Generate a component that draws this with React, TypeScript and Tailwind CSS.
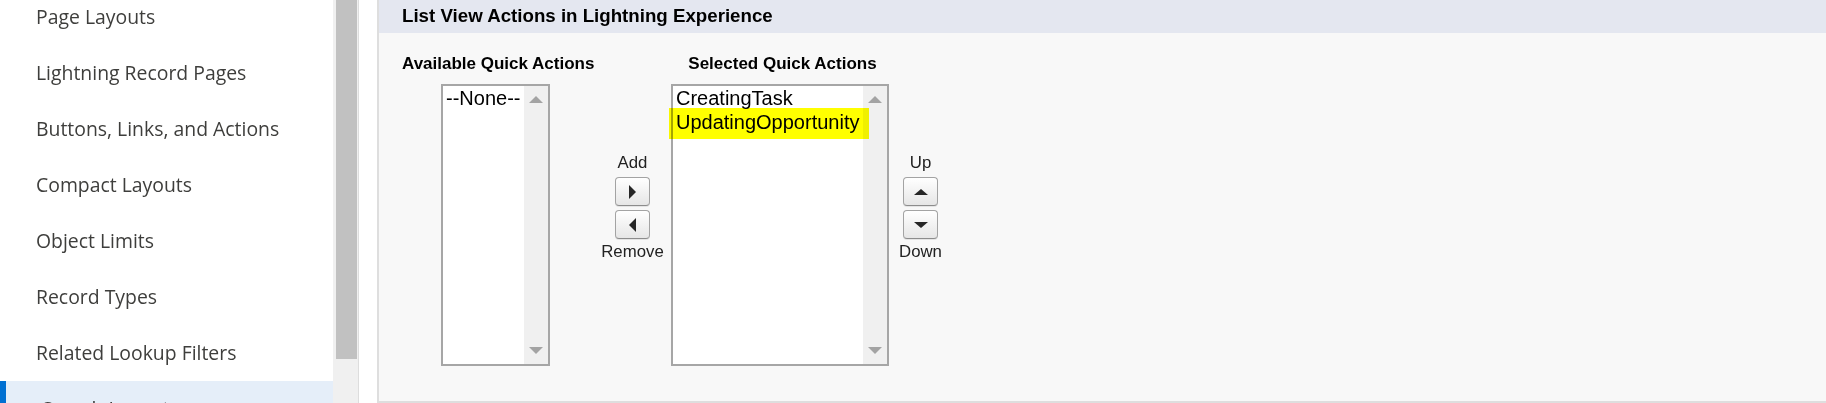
import React from "react";

const navItems = [
  "Page Layouts",
  "Lightning Record Pages",
  "Buttons, Links, and Actions",
  "Compact Layouts",
  "Object Limits",
  "Record Types",
  "Related Lookup Filters",
  "Search Layouts",
];

type Dir = "left" | "right" | "up" | "down";

function ArrowButton({ dir }: { dir: Dir }) {
  const vertical = dir === "up" || dir === "down";
  const d = {
    right: "M4 1 L11 8 L4 15 Z",
    left: "M11 1 L4 8 L11 15 Z",
    up: "M0 8 L7 2 L14 8 Z",
    down: "M0 2 L14 2 L7 8 Z",
  }[dir];
  return (
    <div className="flex h-[29px] w-[35px] items-center justify-center rounded-[4px] border border-[#a3a3a3] border-b-[#8c8c8c] bg-gradient-to-b from-white to-[#e6e6e6] shadow-[0_1px_0_rgba(0,0,0,0.08)]">
      <svg width={vertical ? 14 : 15} height={vertical ? 10 : 16} viewBox={vertical ? "0 0 14 10" : "0 0 15 16"}>
        <path d={d} fill="#262626" />
      </svg>
    </div>
  );
}

function ListBox({ items, width, children }: { items: string[]; width: string; children?: React.ReactNode }) {
  return (
    <div className={`relative flex h-[282px] ${width} border-2 border-[#a6a6a6] bg-white`}>
      <div className="flex-1 pl-[3px]">
        {items.map((it) => (
          <div key={it} className="h-[24px] whitespace-nowrap text-[20px] leading-[24px] text-black">
            {it}
          </div>
        ))}
      </div>
      <div className="flex w-[24px] flex-col items-center justify-between bg-[#f0f0f0] py-[9px]">
        <svg width="14" height="8" viewBox="0 0 14 8">
          <path d="M0 8 L7 1 L14 8 Z" fill="#a3a3a3" />
        </svg>
        <svg width="14" height="8" viewBox="0 0 14 8">
          <path d="M0 0 L14 0 L7 7 Z" fill="#a3a3a3" />
        </svg>
      </div>
      {children}
    </div>
  );
}

function ButtonColumn({ top, bottom, first, second }: { top: string; bottom: string; first: Dir; second: Dir }) {
  return (
    <div className="flex flex-col items-center pt-[99px] text-[16.8px] leading-[19px] text-[#222]">
      <span>{top}</span>
      <div className="mt-[5px]">
        <ArrowButton dir={first} />
      </div>
      <div className="mt-[4px]">
        <ArrowButton dir={second} />
      </div>
      <span className="mt-[3px]">{bottom}</span>
    </div>
  );
}

export default function App() {
  return (
    <div className="flex h-[403px] w-[1826px] overflow-hidden bg-white font-['Liberation_Sans',Arial,sans-serif]">
      {/* setup tree, scrolled part way down */}
      <nav className="w-[333px] shrink-0 overflow-hidden font-['Open_Sans',sans-serif]">
        <ul className="-mt-[11px]">
          {navItems.map((label, i) => (
            <li
              key={label}
              className={`flex h-[56px] items-center pl-[36px] text-[19.4px] text-[#3e3e3c] ${
                i === navItems.length - 1 ? "border-l-[6px] border-[#0070d2] bg-[#e5eef9] pl-[30px]" : ""
              }`}
            >
              {label}
            </li>
          ))}
        </ul>
      </nav>
      <div className="w-[26px] shrink-0 border-r border-[#dddddd] bg-[#f0f0f0] px-[3px]">
        <div className="h-[359px] w-[21px] bg-[#c1c1c1]" />
      </div>
      <div className="w-[18px] shrink-0" />

      {/* edit panel */}
      <section className="flex flex-1 flex-col border-b-[2px] border-l-2 border-[#dedede] bg-[#f8f8f8]">
        <div className="flex h-[33px] shrink-0 items-center bg-[#e4e7f0] pl-[23px]">
          <h3 className="text-[18.7px] font-bold text-black">List View Actions in Lightning Experience</h3>
        </div>
        <div className="flex pl-[23px] pt-[21px]">
          <div className="flex w-[192px] flex-col">
            <div className="h-[20px] whitespace-nowrap text-[17px] font-bold leading-[20px] text-black">Available Quick Actions</div>
            <div className="ml-[39px] mt-[10px]">
              <ListBox items={["--None--"]} width="w-[109px]" />
            </div>
          </div>
          <div className="w-[77px]">
            <ButtonColumn top="Add" bottom="Remove" first="right" second="left" />
          </div>
          <div className="flex w-[218px] flex-col items-center">
            <div className="h-[20px] whitespace-nowrap pl-[5px] text-[17px] font-bold leading-[20px] text-black">Selected Quick Actions</div>
            <div className="mt-[10px]">
              <ListBox items={["CreatingTask", "UpdatingOpportunity"]} width="w-[218px]">
                <div className="pointer-events-none absolute left-[-4px] top-[22px] h-[31px] w-[200px] bg-[#ffff00] mix-blend-multiply" />
              </ListBox>
            </div>
          </div>
          <div className="w-[63px]">
            <ButtonColumn top="Up" bottom="Down" first="up" second="down" />
          </div>
        </div>
      </section>
    </div>
  );
}
